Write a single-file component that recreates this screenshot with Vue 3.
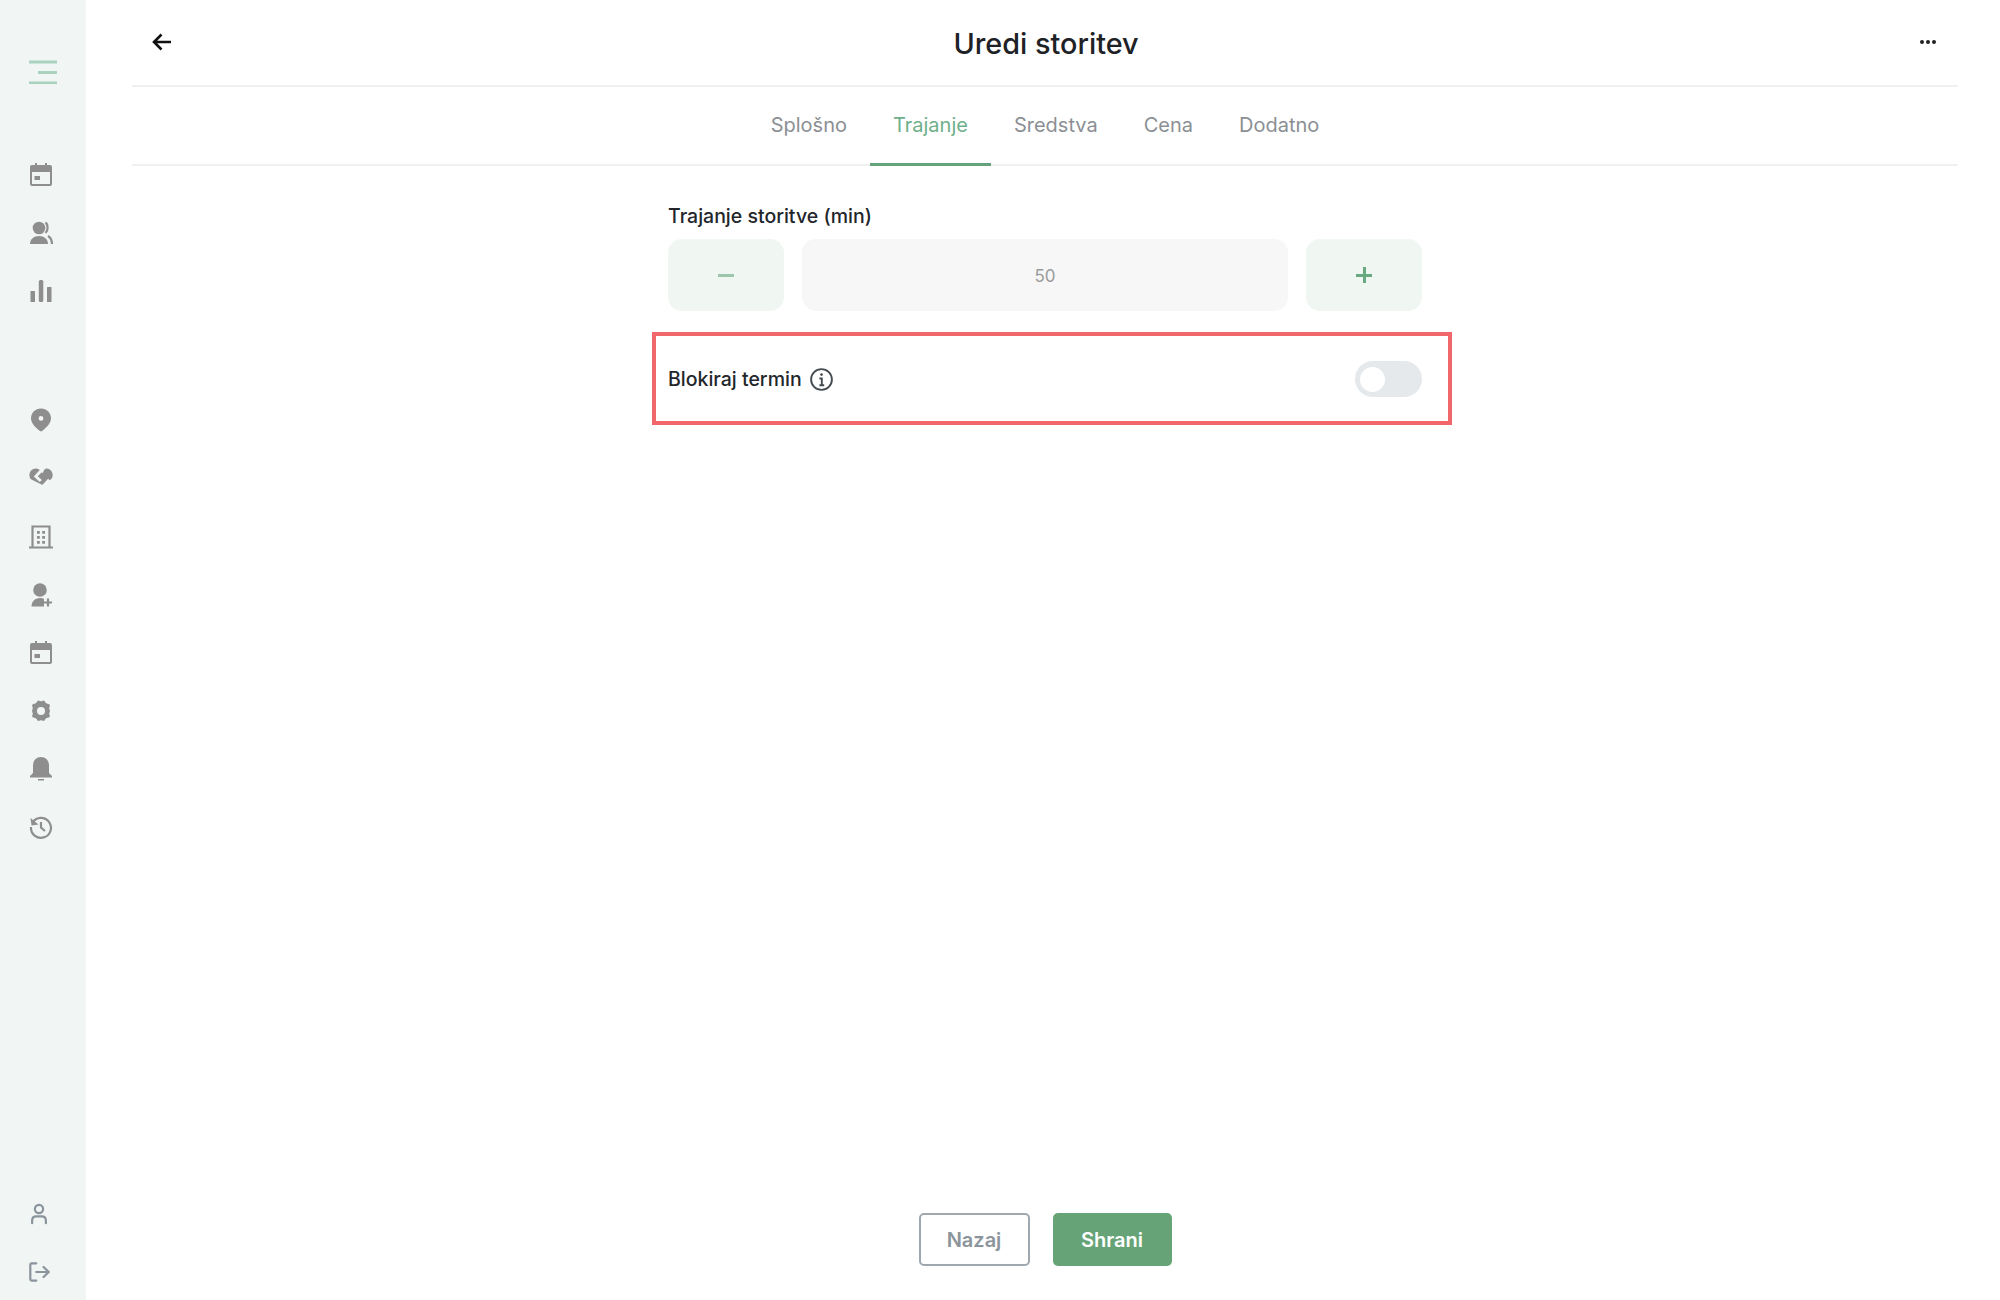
<script setup>
const tabs = ['Splošno', 'Trajanje', 'Sredstva', 'Cena', 'Dodatno']
</script>

<template>
  <div class="app">
    <aside class="side">
      <svg class="burger" viewBox="0 0 28 24" width="28" height="24"><path d="M0 2h28M9 12.500h19M0 23h28" /></svg>
      <nav class="group first">
        <svg class="ic" viewBox="0 0 24 24"><path fill-rule="evenodd" d="M6 0h2v2h8V0h2v2h3a2 2 0 0 1 2 2v17a2 2 0 0 1-2 2H3a2 2 0 0 1-2-2V4a2 2 0 0 1 2-2h3zM3 9v12h18V9zm2.500 4h5.500v4H5.500z"/></svg>
        <svg class="ic" viewBox="0 0 24 24"><circle cx="10" cy="7" r="6.300"/><path d="M1 23c0-5 4-8 9-8s9 3 9 8z"/><path class="ln" d="M16.500 1.500c2.800 2 2.800 8 0 10.500M19 15c2.500 1.500 4 4.500 4 8" /></svg>
        <svg class="ic" viewBox="0 0 24 24"><rect x="1.500" y="12" width="4.500" height="11" rx=".6"/><rect x="9.800" y="1" width="4.500" height="22" rx="1.500"/><rect x="18" y="8" width="4.500" height="15" rx=".6"/></svg>
      </nav>
      <nav class="group second">
        <svg class="ic" viewBox="0 0 24 24"><path fill-rule="evenodd" d="M12 .5c5.700 0 10 4.300 10 9.800 0 5-4.500 9.300-9 12.700a1.600 1.600 0 0 1-2 0c-4.500-3.400-9-7.700-9-12.700C2 4.800 6.300.5 12 .5zm0 7.500a2.400 2.400 0 1 0 0 4.800A2.400 2.400 0 0 0 12 8z"/></svg>
        <svg class="ic" viewBox="0 0 24 24"><path d="M6.500 2.500c1.800 0 3 .5 4.200 1.500L4.800 10.500l6 5.500 2-2-4-3.800 4-4 6.500 6.300-5.300 5.700a1.500 1.500 0 0 1-2 0L1.500 13C-1.500 8.500 2 2.500 6.500 2.500zM17.500 2.500c5 0 8 6 5 10.200l-1.800 1.600-7-6.800 1.300-3.500c1-.9 1.800-1.500 2.500-1.500z"/></svg>
        <svg class="ic" viewBox="0 0 24 24"><path class="ln" d="M3.500 22.500V1.500h17v21M0 22.500h24"/><path d="M8 6h2.800v2.800H8zM13.200 6H16v2.800h-2.800zM8 11h2.800v2.800H8zM13.200 11H16v2.800h-2.800zM8 16h2.800v2.800H8zM13.200 16H16v2.800h-2.800z"/></svg>
        <svg class="ic" viewBox="0 0 24 24"><circle cx="11" cy="7" r="6.800"/><path d="M2.500 23.500c0-5 3.500-8.500 8.500-8.500 2 0 3 .4 4 1v7.500z"/><path class="ln" d="M19 15.500v8M15 19.500h8"/></svg>
        <svg class="ic" viewBox="0 0 24 24"><path fill-rule="evenodd" d="M6 0h2v2h8V0h2v2h3a2 2 0 0 1 2 2v17a2 2 0 0 1-2 2H3a2 2 0 0 1-2-2V4a2 2 0 0 1 2-2h3zM3 9v12h18V9zm2.500 4h5.500v4H5.500z"/></svg>
        <svg class="ic" viewBox="0 0 24 24"><path fill-rule="evenodd" d="M9.500 1.500a5 5 0 0 0 5 0l1 .5a5 5 0 0 0 4.500 3l1 1.500a5 5 0 0 0 0 5.500 5 5 0 0 0 0 5l-1 1.500a5 5 0 0 0-4.500 3l-1 .5a5 5 0 0 0-5 0l-1-.5a5 5 0 0 0-4.500-3l-1-1.500a5 5 0 0 0 0-5 5 5 0 0 0 0-5.500l1-1.500a5 5 0 0 0 4.500-3zM12 8a4 4 0 1 0 0 8 4 4 0 0 0 0-8z"/></svg>
        <svg class="ic" viewBox="0 0 24 24"><path d="M12 0c5 0 8 4 8 8.500V16l3 3v1.500H1V19l3-3V8.500C4 4 7 0 12 0zM9 22h6v1.500H9z"/></svg>
        <svg class="ic" viewBox="0 0 24 24"><path class="ln" d="M3.500 7.500A10 10 0 1 1 2 12M12 7v5.500l4 3.500"/><path d="M1.500 3l1 7.500 7-1z"/></svg>
      </nav>
      <nav class="group bottom">
        <svg class="ic small" viewBox="0 0 24 24"><circle class="ln2" cx="12" cy="6.500" r="4.500"/><path class="ln2" d="M4.500 22v-3c0-3 1.500-4.500 4.500-4.500h6c3 0 4.500 1.500 4.500 4.500v3"/></svg>
        <svg class="ic small" viewBox="0 0 24 24"><path class="ln2" d="M9 2.500H4a1.500 1.500 0 0 0-1.500 1.500v16A1.500 1.500 0 0 0 4 21.500h5M9 12h13M17 6.500l5.500 5.500-5.500 5.500"/></svg>
      </nav>
    </aside>

    <main class="main">
      <header class="head">
        <svg class="back" viewBox="0 0 20 18" width="20" height="18"><path d="M19 9H2M9.500 1.500L2 9l7.500 7.500"/></svg>
        <h1>Uredi storitev</h1>
        <div class="dots"><i></i><i></i><i></i></div>
      </header>
      <div class="tabs">
        <button v-for="t in tabs" :key="t" class="tab" :class="{ on: t === 'Trajanje' }">{{ t }}</button>
      </div>
      <section class="form">
        <label class="lbl">Trajanje storitve (min)</label>
        <div class="stepper">
          <button class="step minus"><span></span></button>
          <div class="val">50</div>
          <button class="step plus"><span></span><span class="v"></span></button>
        </div>
        <div class="block">
          <span class="blabel">Blokiraj termin</span>
          <svg class="info" viewBox="0 0 24 24" width="25" height="25"><circle cx="12" cy="12" r="10"/><path d="M10 11h2.300v6.500M10 17.500h4.600"/><circle class="pt" cx="12" cy="7.300" r="1.300"/></svg>
          <div class="toggle"><div class="knob"></div></div>
        </div>
      </section>
      <footer class="foot">
        <button class="btn ghost">Nazaj</button>
        <button class="btn solid">Shrani</button>
      </footer>
    </main>
  </div>
</template>

<style>
html, body { margin: 0; background: #fff; }
</style>

<style scoped>
.app {
  display: flex;
  width: 2000px;
  height: 1300px;
  overflow: hidden;
  font-family: Inter, "Liberation Sans", sans-serif;
  color: #1b1f24;
}
.side {
  width: 86px;
  flex: none;
  background: #f1f5f4;
  display: flex;
  flex-direction: column;
  align-items: center;
  box-sizing: border-box;
  padding-top: 60px;
  padding-bottom: 17px;
}
.burger { stroke: #a9d3bf; stroke-width: 3; fill: none; }
.group { display: flex; flex-direction: column; gap: 34.150px; margin-right: 4px; }
.first { margin-top: 79px; }
.second { margin-top: 105px; }
.bottom { margin-top: auto; gap: 36px; margin-right: 8px; }
.ic { width: 24px; height: 24px; fill: #8e8e8e; display: block; }
.ic.small { width: 22px; height: 22px; }
.ln { fill: none; stroke: #8e8e8e; stroke-width: 2.200; }
.ln2 { fill: none; stroke: #8a949c; stroke-width: 2.400; stroke-linecap: round; }

.main {
  flex: 1;
  display: flex;
  flex-direction: column;
  padding: 0 42px 34px 46px;
  min-width: 0;
}
.head {
  height: 87px;
  flex: none;
  box-sizing: border-box;
  border-bottom: 2px solid #f0f0f0;
  display: flex;
  align-items: center;
  justify-content: space-between;
  padding: 3px 18px 0 20px;
}
.head h1 {
  margin: 0;
  font-size: 28.800px;
  font-weight: 500;
  line-height: 36px;
  color: #1e2226;
}
.back { stroke: #111; stroke-width: 2.600; fill: none; margin-top: -4px; }
.dots { display: flex; gap: 2px; width: 20px; margin-top: -4px; }
.dots i { width: 4px; height: 4px; border-radius: 50%; background: #222; }

.tabs {
  height: 79px;
  flex: none;
  box-sizing: border-box;
  border-bottom: 2px solid #f0f0f0;
  display: flex;
  justify-content: center;
}
.tab {
  height: 79px;
  box-sizing: border-box;
  padding: 0 23px;
  border: 0;
  background: none;
  font: 400 20px Inter, "Liberation Sans", sans-serif;
  color: #8b8f94;
  border-bottom: 3px solid transparent;
}
.tab.on { color: #6fb08a; border-bottom-color: #66a37c; }

.form {
  width: 754px;
  align-self: center;
  display: flex;
  flex-direction: column;
}
.lbl {
  margin-top: 37px;
  font-size: 19.500px;
  line-height: 26px;
  font-weight: 500;
  color: #22262a;
}
.stepper {
  display: flex;
  gap: 18px;
  margin-top: 10px;
  height: 72px;
}
.step {
  width: 116px;
  flex: none;
  border: 0;
  border-radius: 14px;
  background: #f0f6f2;
  position: relative;
}
.step span {
  position: absolute;
  left: 50%;
  top: 50%;
  width: 16px;
  height: 3px;
  margin: -1.500px 0 0 -8px;
  background: #9cc7ac;
}
.plus span { background: #69a97f; }
.plus .v { width: 3px; height: 16px; margin: -8px 0 0 -1.500px; }
.val {
  flex: 1;
  border-radius: 14px;
  background: #f7f7f7;
  display: flex;
  align-items: center;
  justify-content: center;
  font-size: 17px;
  color: #9a9a9a;
  padding-top: 1px;
}
.block {
  margin: 21px -30px 0 -16px;
  height: 93px;
  box-sizing: border-box;
  border: 4px solid #f1676b;
  display: flex;
  align-items: center;
  padding: 1px 26px 0 12px;
}
.blabel { font-size: 19.500px; font-weight: 500; color: #22262a; }
.info { margin-left: 7px; fill: none; stroke: #444b50; stroke-width: 1.800; }
.info .pt { fill: #444b50; stroke: none; }
.toggle {
  margin-left: auto;
  width: 67px;
  height: 36px;
  border-radius: 18px;
  background: #e6e9ec;
  position: relative;
}
.knob {
  position: absolute;
  left: 5px;
  top: 5.500px;
  width: 25px;
  height: 25px;
  border-radius: 50%;
  background: #fff;
}

.foot {
  margin-top: auto;
  display: flex;
  justify-content: center;
  gap: 23px;
  height: 53px;
}
.btn {
  height: 53px;
  box-sizing: border-box;
  border-radius: 5px;
  font: 600 20px Inter, "Liberation Sans", sans-serif;
}
.ghost { width: 111px; background: #fff; border: 2px solid #a0a8af; color: #8d959c; }
.solid { width: 119px; background: #66a377; border: 0; color: #fff; }
</style>
